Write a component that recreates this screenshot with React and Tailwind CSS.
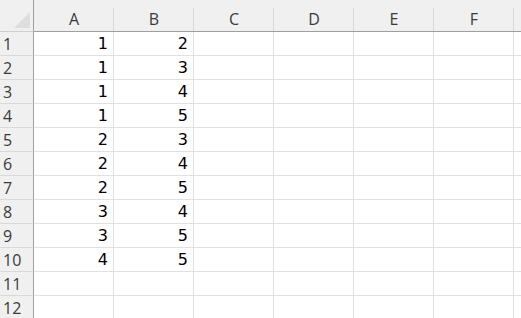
const columns = ["A", "B", "C", "D", "E", "F", ""];

const data = [
  [1, 2],
  [1, 3],
  [1, 4],
  [1, 5],
  [2, 3],
  [2, 4],
  [2, 5],
  [3, 4],
  [3, 5],
  [4, 5],
  [],
  [],
];

export default function App() {
  return (
    <div className="w-[521px] h-[318px] overflow-hidden bg-white">
      <div className="grid grid-cols-[34px_repeat(6,80px)_80px]">
        {/* Corner */}
        <div className="relative h-[32px] bg-[#f0f0f0] border-b border-r border-b-[#cfcfcf] border-r-[#9f9f9f]">
          <div className="absolute left-[14px] top-[12px] w-0 h-0 border-l-[16px] border-l-transparent border-b-[16px] border-b-[#dedede]" />
        </div>

        {/* Column headers */}
        {columns.map((col, i) => (
          <div
            key={`h-${i}`}
            className="relative h-[32px] bg-[#f0f0f0] border-b border-b-[#9f9f9f] flex items-center justify-center pt-[6px] text-[16px] text-[#3a3a3a] font-['Open_Sans',sans-serif]"
          >
            {col}
            <div className="absolute right-0 top-[8px] bottom-0 w-px bg-[#d9d9d9]" />
          </div>
        ))}

        {/* Rows */}
        {data.map((row, r) => (
          <Row key={r} index={r + 1} values={row} />
        ))}
      </div>
    </div>
  );
}

function Row({ index, values }) {
  return (
    <>
      <div className="h-[24px] bg-[#f0f0f0] border-r border-b border-r-[#9f9f9f] border-b-[#d9d9d9] flex items-center pl-[3px] text-[16px] text-[#3a3a3a] font-['Open_Sans',sans-serif]">
        {index}
      </div>
      {columns.map((_, c) => (
        <div
          key={c}
          className="h-[24px] border-r border-b border-[#e1e1e1] flex items-center justify-end pr-[5px] text-[16px] text-black font-['DejaVu_Sans',sans-serif]"
        >
          {values[c] ?? ""}
        </div>
      ))}
    </>
  );
}
